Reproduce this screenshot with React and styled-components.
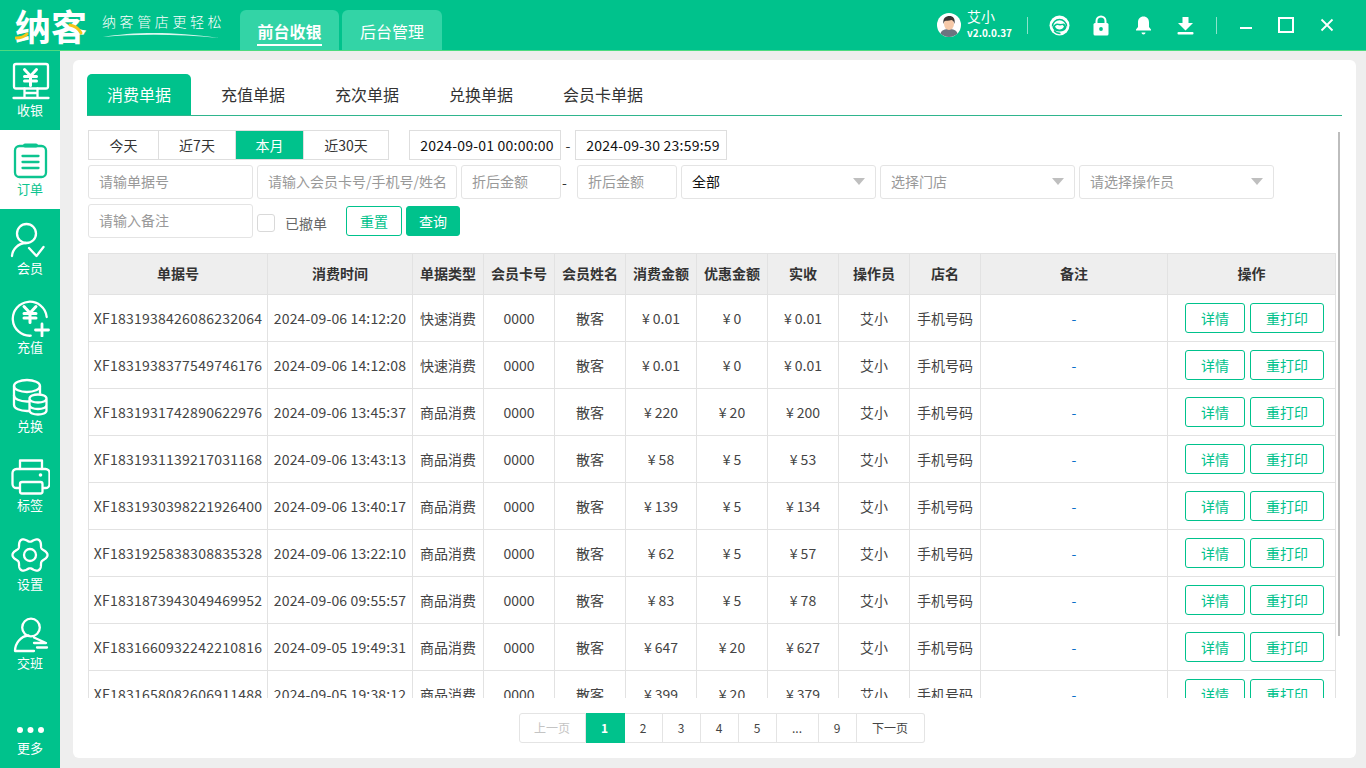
import React from "react";
import styled, { createGlobalStyle } from "styled-components";

const GREEN = "#00c28c";
const FONT = `"Noto Sans CJK SC", "Noto Sans", sans-serif`;

const Global = createGlobalStyle`
  html, body { margin: 0; padding: 0; background: #eee; }
  body { font-family: ${FONT}; color: #333; }
  * { box-sizing: border-box; }
`;

const Window = styled.div`
  width: 1366px; height: 768px; display: flex; flex-direction: column; overflow: hidden; background: #eee;
`;
const Header = styled.header`
  height: 51px; flex: none; display: flex; align-items: stretch; background: ${GREEN}; border-bottom: 1px solid #4edb80; color: #fff;
`;
const Brand = styled.div`
  width: 240px; flex: none; display: flex; align-items: center; padding-left: 15px; gap: 14px;
`;
const LogoMark = styled.div`
  position: relative; width: 73px; height: 40px; font-size: 36px; line-height: 40px; font-weight: 700; color: #fff; white-space: nowrap; letter-spacing: 0;
`;
const LogoAccent = styled.svg`
  position: absolute; left: 0; top: 0; width: 73px; height: 40px;
`;
const Slogan = styled.div`
  display: flex; flex-direction: column; width: 124px; font-size: 14px; line-height: 18px; letter-spacing: 3.6px; white-space: nowrap; font-weight: 300; margin-top: 1px;
`;
const Swoosh = styled.svg`
  display: block; width: 118px; height: 8px; margin-top: 1px;
`;
const HeadTabs = styled.nav`
  display: flex; gap: 3px; padding-top: 10px;
`;
const HeadTab = styled.div`
  width: ${p => p.$w}px; height: 40px; border-radius: 6px 6px 0 0; background: #33d4a6; display: flex; justify-content: center; align-items: center; font-size: 16px; font-weight: ${p => (p.$active ? 700 : 400)};
`;
const HeadTabText = styled.span`
  line-height: 26px; border-bottom: ${p => (p.$active ? "2px solid #fff" : "none")}; margin-top: ${p => (p.$active ? "3px" : "2px")};
`;
const HeadRight = styled.div`
  margin-left: auto; display: flex; align-items: center; padding-right: 32px;
`;
const Avatar = styled.svg`
  width: 24px; height: 24px; margin-right: 6px; display: block;
`;
const UserInfo = styled.div`
  width: 60px; display: flex; flex-direction: column; margin-top: -1px;
`;
const UserName = styled.div`
  font-size: 14px; line-height: 17px;
`;
const Version = styled.div`
  font-size: 10px; line-height: 16px; font-weight: 700; white-space: nowrap;
`;
const Sep = styled.div`
  width: 1px; height: 17px; background: rgba(255,255,255,.55);
`;
const HeadIcons = styled.div`
  display: flex; align-items: center; margin: 0 10px;
`;
const HeadIconBox = styled.div`
  width: 42px; height: 24px; display: flex; justify-content: center; align-items: center;
`;
const WinButtons = styled.div`
  display: flex; align-items: center; gap: 26px; margin-left: 23px;
`;

const Body = styled.div`
  flex: 1; display: flex; min-height: 0;
`;
const Sidebar = styled.aside`
  width: 60px; flex: none; background: ${GREEN}; display: flex; flex-direction: column;
`;
const SideItem = styled.div`
  height: 79px; flex: none; padding-top: 9px; display: flex; flex-direction: column; align-items: center; color: ${p => (p.$active ? "#0cc48f" : "#fff")}; background: ${p => (p.$active ? "#fff" : "transparent")}; margin-top: ${p => (p.$push ? "auto" : "0")};
`;
const SideIcon = styled.svg`
  width: 40px; height: 40px; display: block; fill: none; stroke: currentColor; stroke-width: 2.3; stroke-linecap: round; stroke-linejoin: round;
`;
const SideLabel = styled.div`
  font-size: 13px; line-height: 20px;
`;
const Main = styled.main`
  flex: 1; min-width: 0; padding: 9px 10px 10px 13px;
`;
const Card = styled.section`
  height: 100%; background: #fff; border-radius: 6px; padding: 14px 14px 15px; display: flex; flex-direction: column;
`;
const Tabs = styled.div`
  display: flex; gap: 10px; height: 42px; flex: none; border-bottom: 1px solid #2fb58d;
`;
const Tab = styled.div`
  padding: 0 20px; height: 41px; line-height: 41px; font-size: 16px; border-radius: 5px 5px 0 0; color: ${p => (p.$active ? "#fff" : "#333")}; background: ${p => (p.$active ? GREEN : "transparent")};
`;
const ScrollArea = styled.div`
  position: relative; flex: 1; min-height: 0; overflow: hidden; margin-top: 14px; padding-left: 1px;
`;
const ScrollThumb = styled.div`
  position: absolute; right: 2px; top: 2px; width: 2px; height: 504px; background: #bdbdbd;
`;
const Row = styled.div`
  display: flex; align-items: center; gap: ${p => p.$gap ?? 4}px; height: ${p => p.$h}px; margin-bottom: ${p => p.$mb || 5}px;
`;
const Segments = styled.div`
  display: flex; border: 1px solid #dedede; height: 30px; margin-right: 20px;
`;
const Segment = styled.div`
  width: ${p => p.$w}px; height: 28px; text-align: center; font-size: 14px; line-height: 29px; color: ${p => (p.$active ? "#fff" : "#333")}; background: ${p => (p.$active ? GREEN : "#fff")}; border-left: ${p => (p.$first ? "none" : "1px solid #dedede")};
`;
const DateBox = styled.div`
  width: 152px; height: 30px; border: 1px solid #dedede; padding-left: 4px; font-size: 14px; line-height: 29px; text-align: center; color: #111; white-space: nowrap; letter-spacing: .22px;
`;
const Dash = styled.span`
  width: 14px; text-align: center; font-size: 14px; color: #333;
`;
const RangeDash = styled.span`
  width: 8px; margin: 0 3px 0 -3px; font-size: 14px; color: #333;
`;
const Input = styled.input`
  width: ${p => p.$w}px; height: 34px; border: 1px solid #e4e4e4; border-radius: 3px; padding: 0 10px 2px; font-family: ${FONT}; font-size: 14px; color: #333; outline: none; background: #fff;
  &::placeholder { color: #999; opacity: 1; }
`;
const Select = styled.div`
  width: 195px; height: 34px; border: 1px solid #e4e4e4; border-radius: 3px; padding: 0 10px 2px; font-size: 14px; line-height: 30px; color: ${p => (p.$value ? "#111" : "#999")}; display: flex; justify-content: space-between; align-items: center;
`;
const Caret = styled.i`
  width: 0; height: 0; border-left: 6px solid transparent; border-right: 6px solid transparent; border-top: 7px solid #bfbfbf;
`;
const Check = styled.div`
  width: 18px; height: 18px; border: 1px solid #d9d9d9; border-radius: 3px; margin-top: 4px;
`;
const CheckLabel = styled.span`
  font-size: 14px; color: #666; margin: 4px 15px 0 6px; white-space: nowrap;
`;
const Btn = styled.button`
  width: ${p => p.$w}px; height: 30px; padding: 0 0 1px; border: 1px solid ${GREEN}; border-radius: 3px; font-family: ${FONT}; font-size: 14px; line-height: 26px; background: ${p => (p.$solid ? GREEN : "#fff")}; color: ${p => (p.$solid ? "#fff" : GREEN)};
`;
const Table = styled.table`
  table-layout: fixed; border-collapse: collapse; width: 1247px; font-size: 14px;
`;
const Th = styled.th`
  height: 41px; background: #eee; border: 1px solid #e2e2e2; font-size: 14px; font-weight: 700; color: #333; padding: 0 0 2px; white-space: nowrap;
`;
const Td = styled.td`
  height: 47px; border: 1px solid #e2e2e2; text-align: center; color: ${p => p.$color || "#444"}; font-size: 14px; padding: 0; white-space: nowrap; letter-spacing: ${p => p.$ls || 0}px;
`;
const Yen = styled.span`
  margin-right: 3px;
`;
const RowActions = styled.div`
  display: flex; justify-content: center; gap: 5px; padding-left: 6px;
`;
const Pager = styled.div`
  display: flex; justify-content: center; flex: none; height: 30px; margin-top: 15px; padding-left: 14px;
`;
const PageCell = styled.div`
  width: ${p => p.$w}px; height: 30px; border: 1px solid #e4e4e4; border-left: ${p => (p.$first ? "1px solid #e4e4e4" : "none")}; font-size: 12px; line-height: 28px; text-align: center; color: ${p => (p.$off ? "#c4c4c4" : p.$active ? "#fff" : "#444")}; background: ${p => (p.$active ? GREEN : "#fff")}; border-color: ${p => (p.$active ? GREEN : "#e4e4e4")}; border-radius: ${p => p.$radius || "0"}; font-weight: ${p => (p.$active ? 700 : 400)};
`;

const Y = "M14.5 9.5l6 6.5 6-6.5M20.5 16v9.5M14.5 16.5h12M14.5 21h12";

const gearPath = (() => {
  let d = "";
  for (let i = 0; i <= 180; i++) {
    const t = (i / 180) * Math.PI * 2;
    const r = 15.4 + 2.1 * Math.cos(6 * t);
    d += `${i ? "L" : "M"}${(20 + r * Math.cos(t)).toFixed(2)} ${(21 + r * Math.sin(t)).toFixed(2)}`;
  }
  return d + "Z";
})();

const navItems = [
  { label: "收银", icon: <><rect x="4" y="4" width="34" height="24.5" rx="2" /><path d={Y} strokeWidth="3" /><path d="M14.5 28.5v9M27.5 28.5v9M3.5 38h35M14.5 33h13" /></> },
  { label: "订单", active: true, icon: <><rect x="5" y="7" width="31" height="31" rx="4.5" /><path d="M15 6.5h11" strokeWidth="4" /><path d="M12.5 17h16M12.5 23h16M12.5 29h16" /></> },
  { label: "会员", icon: <><circle cx="16.5" cy="15.5" r="9.5" /><path d="M2 38c.5-7 6-12.5 14-13" /><path d="M19 30l7.5 8 7-9" /></> },
  { label: "充值", icon: <><path d="M36.7 20a17 17 0 1 0-16 18.7" /><path d={Y} transform="translate(-.5 0)" strokeWidth="3" /><path d="M32 27v12M25.5 33h13" strokeWidth="2.8" /></> },
  { label: "兑换", icon: <><path d="M30 17V10c0-3.5-6-6-13-6S4 6.500 4 10v19c0 3.500 6 6 13 6h2" /><path d="M4 10c0 3.500 6 6 13 6s13-2.500 13-6M4 19.500c0 3.500 6 6 13 6h2" /><path d="M19.500 22.500c0-2.500 4-4 8.500-4s8.500 1.500 8.500 4v12c0 2.500-4 4-8.500 4s-8.500-1.500-8.500-4zM19.500 22.500c0 2.500 4 4 8.500 4s8.500-1.500 8.500-4M19.500 29c0 2.500 4 4 8.500 4s8.500-1.500 8.500-4" /></> },
  { label: "标签", icon: <><path d="M10 14V5.500h22V14" /><path d="M9 33H6.500a4 4 0 0 1-4-4V18a4 4 0 0 1 4-4h29a4 4 0 0 1 4 4v11a4 4 0 0 1-4 4H33" /><rect x="10" y="27" width="22.500" height="11.500" rx="2" /><circle cx="30.500" cy="20" r="1.800" fill="currentColor" stroke="none" /></> },
  { label: "设置", icon: <><path d={gearPath} /><circle cx="20" cy="21" r="6" /></> },
  { label: "交班", icon: <><circle cx="21" cy="14.500" r="8.800" /><path d="M5 38c0-8 6-15 13.500-15.500M5 38h19" /><path d="M24 24.500l12 5.500H24M27 34.500h10" /></> },
];

const rows = [
  ["XF1831938426086232064", "2024-09-06 14:12:20", "快速消费", "0.01", "0", "0.01"],
  ["XF1831938377549746176", "2024-09-06 14:12:08", "快速消费", "0.01", "0", "0.01"],
  ["XF1831931742890622976", "2024-09-06 13:45:37", "商品消费", "220", "20", "200"],
  ["XF1831931139217031168", "2024-09-06 13:43:13", "商品消费", "58", "5", "53"],
  ["XF1831930398221926400", "2024-09-06 13:40:17", "商品消费", "139", "5", "134"],
  ["XF1831925838308835328", "2024-09-06 13:22:10", "商品消费", "62", "5", "57"],
  ["XF1831873943049469952", "2024-09-06 09:55:57", "商品消费", "83", "5", "78"],
  ["XF1831660932242210816", "2024-09-05 19:49:31", "商品消费", "647", "20", "627"],
  ["XF1831658082606911488", "2024-09-05 19:38:12", "商品消费", "399", "20", "379"],
];

const cols = [
  ["单据号", 179], ["消费时间", 145], ["单据类型", 71], ["会员卡号", 71], ["会员姓名", 71], ["消费金额", 71],
  ["优惠金额", 71], ["实收", 71], ["操作员", 71], ["店名", 71], ["备注", 187], ["操作", 168],
];

const pages = [
  { t: "上一页", w: 67, off: true, first: true, radius: "3px 0 0 3px" },
  { t: "1", w: 39, active: true },
  { t: "2", w: 38 }, { t: "3", w: 38 }, { t: "4", w: 38 }, { t: "5", w: 38 },
  { t: "...", w: 42 }, { t: "9", w: 38 },
  { t: "下一页", w: 68, radius: "0 3px 3px 0" },
];

const Money = ({ v }) => <><Yen>¥</Yen>{v}</>;

export default function App() {
  return (
    <Window>
      <Global />
      <Header>
        <Brand>
          <LogoMark>
            纳客
            <LogoAccent viewBox="0 0 73 40">
              <path d="M1 33c4 0 8-1 11-4" stroke="#f5c518" strokeWidth="3" fill="none" strokeLinecap="round" />
              <path d="M55 20c5 1 9 4 11 8" stroke="#f5c518" strokeWidth="3" fill="none" strokeLinecap="round" />
            </LogoAccent>
          </LogoMark>
          <Slogan>
            纳客管店更轻松
            <Swoosh viewBox="0 0 118 8">
              <path d="M1 6C30 1 70 0 117 7C75 3 35 3 1 6Z" fill="#fff" opacity=".85" />
            </Swoosh>
          </Slogan>
        </Brand>
        <HeadTabs>
          <HeadTab $w={99} $active><HeadTabText $active>前台收银</HeadTabText></HeadTab>
          <HeadTab $w={100}><HeadTabText>后台管理</HeadTabText></HeadTab>
        </HeadTabs>
        <HeadRight>
          <Avatar viewBox="0 0 24 24">
            <circle cx="12" cy="12" r="12" fill="#fff" />
            <path d="M3.500 20.500c1-3.500 4.500-4.500 8.500-4.500s7.500 1 8.500 4.500A12 12 0 0 1 12 24a12 12 0 0 1-8.500-3.500z" fill="#6c7480" />
            <ellipse cx="12" cy="11" rx="5" ry="6" fill="#f6c9a8" />
            <path d="M6.500 11C5.500 5 9 3 12.500 3c3.500 0 6 2.500 5 8-.5-2.500-1.500-3.500-3-4-2.500.8-6 .6-7 1.200-.5.700-.7 1.700-1 2.800z" fill="#3a3433" />
          </Avatar>
          <UserInfo>
            <UserName>艾小</UserName>
            <Version>v2.0.0.37</Version>
          </UserInfo>
          <Sep />
          <HeadIcons>
            <HeadIconBox>
              <svg width="21" height="21" viewBox="0 0 21 21" fill="none">
                <circle cx="10.500" cy="10.500" r="10" fill="#fff" />
                <path d="M3.500 11.500a7 7 0 0 1 14 0" stroke={GREEN} strokeWidth="1.500" />
                <path d="M3.500 12.500c1.500-3 3-4 4.500-4 2 .5 5 .5 7 0 1 1 2 2 2.500 4-1 2.500-3 4-7 4s-6-1.500-7-4z" fill={GREEN} />
                <path d="M6 11.500c1-1 1.500-1.500 2.500-1.500 1.500.5 3.500.5 5 0 .7.500 1.200 1 1.500 1.500-.8 2-2.500 3-4.500 3s-3.700-1-4.500-3z" fill="#fff" />
                <path d="M5 15.500c1.500 2 3.500 3 6.500 3" stroke={GREEN} strokeWidth="1.300" />
              </svg>
            </HeadIconBox>
            <HeadIconBox>
              <svg width="16" height="21" viewBox="0 0 16 21" fill="none">
                <path d="M3.500 9V6a4.500 4.500 0 0 1 9 0v3" stroke="#fff" strokeWidth="2" />
                <rect x=".5" y="8" width="15" height="12.500" rx="1.500" fill="#fff" />
                <circle cx="8" cy="14" r="1.900" fill={GREEN} />
              </svg>
            </HeadIconBox>
            <HeadIconBox>
              <svg width="17" height="20" viewBox="0 0 17 20" fill="#fff">
                <path d="M8.500 1.500c3.500 0 5.500 2.500 5.500 6v4.500l2 2.500v1H1v-1l2-2.500V7.500c0-3.500 2-6 5.500-6z" />
                <path d="M6.500 17.500h4c0 1-1 2-2 2s-2-1-2-2z" />
              </svg>
            </HeadIconBox>
            <HeadIconBox>
              <svg width="17" height="19" viewBox="0 0 17 19" fill="#fff">
                <path d="M5.500 1h6v6h4.500l-7.500 7.500L1 7h4.500z" />
                <rect x=".5" y="16" width="16" height="2.500" rx="1" />
              </svg>
            </HeadIconBox>
          </HeadIcons>
          <Sep />
          <WinButtons>
            <svg width="12" height="14" viewBox="0 0 12 14"><rect y="9" width="12" height="2" fill="#fff" /></svg>
            <svg width="16" height="16" viewBox="0 0 16 16" fill="none"><rect x="1" y="1" width="14" height="14" stroke="#fff" strokeWidth="2" /></svg>
            <svg width="14" height="14" viewBox="0 0 14 14" fill="none"><path d="M1.500 1.500l11 11M12.500 1.500l-11 11" stroke="#fff" strokeWidth="1.800" /></svg>
          </WinButtons>
        </HeadRight>
      </Header>
      <Body>
        <Sidebar>
          {navItems.map(n => (
            <SideItem key={n.label} $active={n.active}>
              <SideIcon viewBox="0 0 40 40">{n.icon}</SideIcon>
              <SideLabel>{n.label}</SideLabel>
            </SideItem>
          ))}
          <SideItem $push>
            <SideIcon viewBox="0 0 40 40">
              <circle cx="10" cy="32" r="3" fill="currentColor" stroke="none" />
              <circle cx="20.500" cy="32" r="3" fill="currentColor" stroke="none" />
              <circle cx="31" cy="32" r="3" fill="currentColor" stroke="none" />
            </SideIcon>
            <SideLabel>更多</SideLabel>
          </SideItem>
        </Sidebar>
        <Main>
          <Card>
            <Tabs>
              <Tab $active>消费单据</Tab>
              <Tab>充值单据</Tab>
              <Tab>充次单据</Tab>
              <Tab>兑换单据</Tab>
              <Tab>会员卡单据</Tab>
            </Tabs>
            <ScrollArea>
              <ScrollThumb />
              <Row $h={30} $gap={0}>
                <Segments>
                  <Segment $w={69} $first>今天</Segment>
                  <Segment $w={77}>近7天</Segment>
                  <Segment $w={68} $active>本月</Segment>
                  <Segment $w={85}>近30天</Segment>
                </Segments>
                <DateBox>2024-09-01 00:00:00</DateBox>
                <Dash>-</Dash>
                <DateBox>2024-09-30 23:59:59</DateBox>
              </Row>
              <Row $h={34}>
                <Input $w={165} placeholder="请输单据号" readOnly />
                <Input $w={200} placeholder="请输入会员卡号/手机号/姓名" readOnly />
                <Input $w={100} placeholder="折后金额" readOnly />
                <RangeDash>-</RangeDash>
                <Input $w={100} placeholder="折后金额" readOnly />
                <Select $value>全部<Caret /></Select>
                <Select>选择门店<Caret /></Select>
                <Select>请选择操作员<Caret /></Select>
              </Row>
              <Row $h={34} $mb={15}>
                <Input $w={165} placeholder="请输入备注" readOnly />
                <Check />
                <CheckLabel>已撤单</CheckLabel>
                <Btn $w={56}>重置</Btn>
                <Btn $w={54} $solid>查询</Btn>
              </Row>
              <Table>
                <colgroup>{cols.map(([c, w]) => <col key={c} width={w} />)}</colgroup>
                <thead>
                  <tr>{cols.map(([c]) => <Th key={c}>{c}</Th>)}</tr>
                </thead>
                <tbody>
                  {rows.map(r => (
                    <tr key={r[0]}>
                      <Td $ls={0.25}>{r[0]}</Td>
                      <Td $ls={0.15}>{r[1]}</Td>
                      <Td>{r[2]}</Td>
                      <Td>0000</Td>
                      <Td>散客</Td>
                      <Td><Money v={r[3]} /></Td>
                      <Td><Money v={r[4]} /></Td>
                      <Td><Money v={r[5]} /></Td>
                      <Td>艾小</Td>
                      <Td>手机号码</Td>
                      <Td $color="#0b6fc9">-</Td>
                      <Td>
                        <RowActions>
                          <Btn $w={60}>详情</Btn>
                          <Btn $w={74}>重打印</Btn>
                        </RowActions>
                      </Td>
                    </tr>
                  ))}
                </tbody>
              </Table>
            </ScrollArea>
            <Pager>
              {pages.map(p => (
                <PageCell key={p.t} $w={p.w} $off={p.off} $active={p.active} $first={p.first} $radius={p.radius}>{p.t}</PageCell>
              ))}
            </Pager>
          </Card>
        </Main>
      </Body>
    </Window>
  );
}
